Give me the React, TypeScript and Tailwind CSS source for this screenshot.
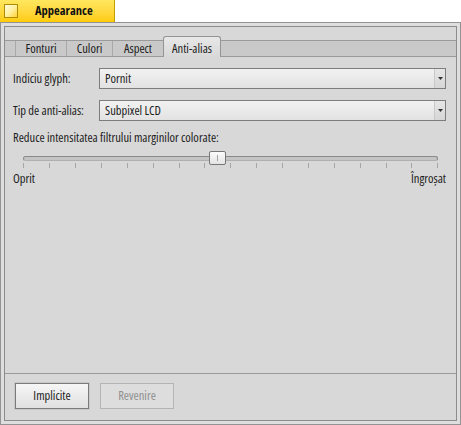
import React from "react";

const FONT = "font-['Open_Sans','Noto_Sans',sans-serif] font-stretch-condensed";

function Dropdown({ value }: { value: string }) {
  return (
    <div className="flex h-[21px] w-[347px] border border-[#7d7d7d] bg-gradient-to-b from-[#f2f2f2] to-[#e2e2e2]">
      <div className="flex flex-1 items-center pl-[5px] text-[#1c1c1c]">{value}</div>
      <div className="flex w-[11px] items-center justify-center border-l border-[#c9c9c9] bg-gradient-to-b from-[#e6e6e6] to-[#d6d6d6]">
        <svg width="5" height="3" viewBox="0 0 5 3">
          <path d="M0 0 H5 L2.5 3 Z" fill="#333" />
        </svg>
      </div>
    </div>
  );
}

function Button({ label, disabled }: { label: string; disabled?: boolean }) {
  return (
    <div
      className={
        "flex h-[26px] w-[74px] items-center justify-center border " +
        (disabled
          ? "border-[#b4b4b4] bg-[#dddddd] text-[#8f8f8f]"
          : "border-[#7c7c7c] bg-gradient-to-b from-[#f6f6f6] to-[#e0e0e0] text-[#1c1c1c] shadow-[0_0_0_1px_#c8c8c8]")
      }
    >
      {label}
    </div>
  );
}

const ticks = Array.from({ length: 17 }, (_, i) => 10.3 + i * 25.875);

export default function App() {
  return (
    <div className={"w-[461px] h-[425px] bg-white text-[12.5px] leading-[16px] text-[#1c1c1c] " + FONT}>
      {/* Title tab */}
      <div className="flex h-[22px] w-[115px] items-center border-r border-[#c09f00] bg-gradient-to-b from-[#ffe75e] to-[#ffcb00]">
        <div className="ml-[4px] h-[14px] w-[14px] border border-[#b08c00] bg-gradient-to-br from-[#fffbe0] via-[#fff0a0] to-[#ffd200]" />
        <span className="ml-[17px] font-bold text-[#111]">Appearance</span>
      </div>

      {/* Window frame */}
      <div className="h-[403px] w-[461px] border border-[#939393] bg-[#dedede] p-[3px]">
        <div className="flex h-full w-full flex-col border border-[#8c8c8c] bg-[#d8d8d8]">
          {/* Tab bar */}
          <div className="mt-[13px] flex h-[17px] border-y border-[#9a9a9a] bg-[#c9c9c9]">
            <div className="w-[10px]" />
            <div className="flex w-[51px] items-center justify-center border-l border-[#a9a9a9]">Fonturi</div>
            <div className="flex w-[46px] items-center justify-center border-l border-[#a9a9a9]">Culori</div>
            <div className="flex w-[51px] items-center justify-center border-l border-[#a9a9a9]">Aspect</div>
            <div className="relative -mb-px -mt-[5px] flex w-[58px] items-start justify-center rounded-t-[3px] border-x border-t border-[#949494] bg-gradient-to-b from-[#e8e8e8] to-[#d8d8d8] pt-[4px]">
              Anti-alias
            </div>
          </div>

          {/* Tab content */}
          <div className="flex h-[317px] flex-col border-b border-[#9a9a9a] pl-[8px] pr-[10px] pt-[11px]">
            <div className="flex h-[21px] items-center">
              <div className="w-[86px]">Indiciu glyph:</div>
              <Dropdown value="Pornit" />
            </div>
            <div className="mt-[11px] flex h-[21px] items-center">
              <div className="w-[86px]">Tip de anti-alias:</div>
              <Dropdown value="Subpixel LCD" />
            </div>
            <div className="mt-[9px]">Reduce intensitatea filtrului marginilor colorate:</div>

            {/* Slider */}
            <div className="relative mt-[5px] h-[17px]">
              <div className="absolute left-[10px] top-[5px] h-[5px] w-[415px] rounded-full border border-[#8a8a8a] border-b-[#b0b0b0] bg-[#c4c4c4]" />
              {ticks.map((x, i) => (
                <div
                  key={i}
                  className="absolute top-[12px] h-[5px] w-px bg-[#a6a6a6]"
                  style={{ left: Math.round(x) }}
                />
              ))}
              <div className="absolute left-[196px] top-0 flex h-[14px] w-[17px] items-center justify-center rounded-[2px] border border-[#777777] bg-gradient-to-b from-[#fbfbfb] to-[#e4e4e4]">
                <div className="h-[6px] w-px bg-[#a4a4a4]" />
              </div>
            </div>

            <div className="mt-[3px] flex justify-between">
              <span>Oprit</span>
              <span>Îngroșat</span>
            </div>
          </div>

          {/* Buttons */}
          <div className="flex gap-[11px] pl-[10px] pt-[9px]">
            <Button label="Implicite" />
            <Button label="Revenire" disabled />
          </div>
        </div>
      </div>
    </div>
  );
}
